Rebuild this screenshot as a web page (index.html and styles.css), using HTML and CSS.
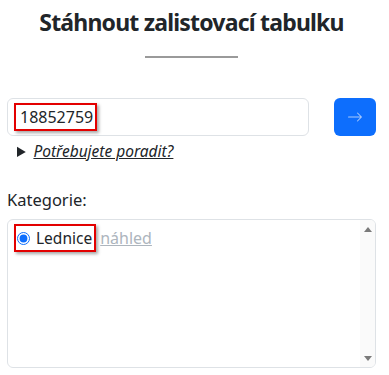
FILE: index.html
```html
<!DOCTYPE html>
<html lang="cs">
<head>
    <meta charset="UTF-8">
    <meta name="viewport" content="width=device-width, initial-scale=1.0">
    <title>Stáhnout zalistovací tabulku</title>
    <link rel="stylesheet" href="styles.css">
</head>
<body>
    <h1 class="title">Stáhnout zalistovací tabulku</h1>
    <hr class="divider">

    <form class="search">
        <div class="search-row">
            <div class="input-box">
                <span class="mark">18852759</span>
            </div>
            <button type="button" class="go-button">
                <svg width="16" height="16" viewBox="0 0 16 16" fill="currentColor">
                    <path fill-rule="evenodd" d="M1 8a.5.5 0 0 1 .5-.5h11.793l-3.147-3.146a.5.5 0 0 1 .708-.708l4 4a.5.5 0 0 1 0 .708l-4 4a.5.5 0 0 1-.708-.708L13.293 8.5H1.5A.5.5 0 0 1 1 8"/>
                </svg>
            </button>
        </div>
        <details class="help">
            <summary><span>Potřebujete poradit?</span></summary>
        </details>
    </form>

    <label class="cat-label">Kategorie:</label>
    <div class="cat-box">
        <div class="cat-list">
            <div class="cat-item">
                <span class="mark radio-mark">
                    <input type="radio" name="kat" checked>
                    Lednice
                </span>
                <a href="#" class="preview">náhled</a>
            </div>
        </div>
        <div class="scrollbar">
            <span class="arrow up"></span>
            <span class="arrow down"></span>
        </div>
    </div>
</body>
</html>
```

FILE: styles.css
```css
body {
    font-family: "Noto Sans", "Open Sans", sans-serif;
    margin: 0;
    padding: 0 13px 0 7px;
    color: #212529;
    background: #fff;
}

.title {
    font-size: 23px;
    font-weight: 700;
    letter-spacing: -0.8px;
    text-align: center;
    margin: 0;
    padding-top: 6px;
    line-height: 32px;
}

.divider {
    width: 93px;
    height: 2px;
    border: none;
    background: #9a9a9a;
    margin: 18px auto 0;
}

.search {
    margin-top: 40px;
}

.search-row {
    display: flex;
    gap: 25px;
}

.input-box {
    flex: 1;
    height: 36px;
    border: 1px solid #dee2e6;
    border-radius: 6px;
    display: flex;
    align-items: center;
    padding-left: 6px;
    font-size: 16px;
}

.mark {
    border: 2px solid #e30000;
    box-shadow: 2px 2px 3px rgba(0, 0, 0, 0.35);
    padding: 1px 2px 1px 4px;
    display: inline-flex;
    align-items: center;
    gap: 6px;
}

.radio-mark {
    padding: 1px 2px 1px 1px;
    font-size: 15.5px;
}

.go-button {
    width: 42px;
    height: 38px;
    background: #0d6efd;
    color: #a9c9fb;
    border: none;
    border-radius: 6px;
    display: flex;
    align-items: center;
    justify-content: center;
    padding: 0;
}

.help {
    margin: 4px 0 0 10px;
    font-size: 15.5px;
}

.help summary {
    cursor: pointer;
    font-style: italic;
    font-weight: 400;
}

.help summary span {
    text-decoration: underline;
}

.cat-label {
    display: block;
    margin-top: 27px;
    font-size: 16.5px;
    line-height: 22px;
}

.cat-box {
    display: flex;
    margin-top: 8px;
    height: 147px;
    border: 1px solid #dee2e6;
    border-radius: 6px;
    overflow: hidden;
}

.cat-list {
    flex: 1;
    padding: 4px 0 0 6px;
}

.cat-item {
    display: flex;
    align-items: center;
    gap: 4px;
    font-size: 16px;
}

.cat-item input {
    margin: 0;
    width: 13px;
    height: 13px;
    accent-color: #0d6efd;
}

.preview {
    color: #adb5bd;
    font-size: 16px;
}

.scrollbar {
    width: 15px;
    background: #fafafa;
    display: flex;
    flex-direction: column;
    justify-content: space-between;
    align-items: center;
    padding: 7px 0 6px;
}

.arrow {
    width: 0;
    height: 0;
    border-left: 4px solid transparent;
    border-right: 4px solid transparent;
}

.arrow.up {
    border-bottom: 5px solid #7a7a7a;
}

.arrow.down {
    border-top: 5px solid #7a7a7a;
}
```
